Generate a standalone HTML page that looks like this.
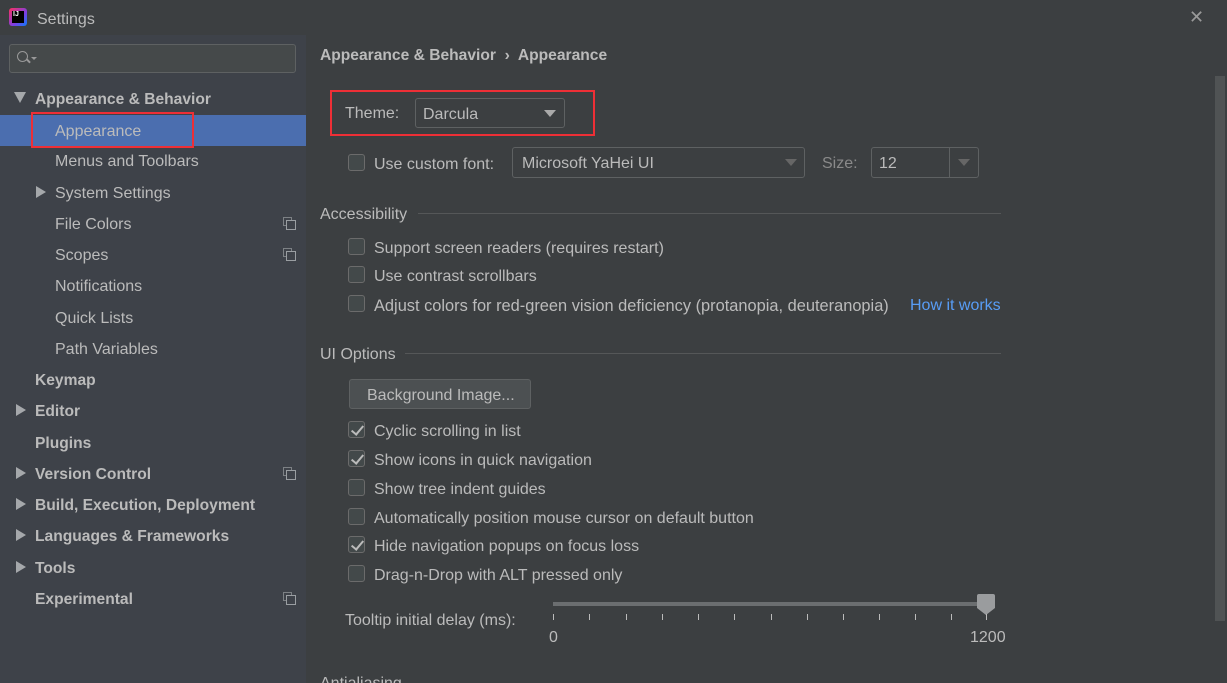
<!DOCTYPE html>
<html style="overflow:hidden"><head><meta charset="utf-8"><style>
*{margin:0;padding:0;box-sizing:border-box}
html,body{width:1227px;height:683px;overflow:hidden}
body{background:#3c3f41;font-family:"Liberation Sans",sans-serif;color:#bbbbbb;font-size:16px;position:relative}
.a{position:absolute;white-space:nowrap;line-height:20px;margin-top:2px}
.b{font-weight:bold;font-size:15.6px}
#side{position:absolute;left:0;top:35px;width:306px;height:648px;background:#3e4249}
.tri{position:absolute;width:0;height:0;border-top:6px solid transparent;border-bottom:6px solid transparent;border-left:10px solid #a5a8ab}
.cb{position:absolute;width:17px;height:17px;border:1px solid #6b6b6b;border-radius:3px;background:#43494a}
.cb.on::after{content:"";position:absolute;left:5px;top:1px;width:5px;height:10px;border:solid #bbbbbb;border-width:0 2px 2px 0;transform:rotate(40deg)}
.ico{position:absolute;width:9px;height:9px;border:1px solid #7d8185}
.ico::after{content:"";position:absolute;left:2px;top:2px;width:8px;height:8px;border:1px solid #9a9ea2;background:#3e4249}
.line{position:absolute;height:1px;background:#555758}
.tick{position:absolute;width:1px;height:6px;background:#bbb;top:614px}
</style></head><body>
<div style="position:absolute;left:9px;top:8px;width:18px;height:18px;border-radius:3px;background:linear-gradient(135deg,#fe315d,#7b3fe4 60%,#087cfa)"></div>
<div style="position:absolute;left:12px;top:11px;width:12px;height:12px;background:#000;color:#fff;font-size:7px;font-weight:bold;line-height:8px;padding-left:1px">IJ</div>
<div class="a" style="left:37px;top:8px;font-size:16px">Settings</div>
<div class="a" style="left:1189px;top:5px;font-size:18px;color:#9a9a9a">✕</div>

<div id="side"></div>
<div style="position:absolute;left:9px;top:44px;width:287px;height:29px;border:1px solid #5e6162;border-radius:3px;background:#45494a"></div>
<div style="position:absolute;left:17px;top:51px;width:11px;height:11px;border:1.5px solid #999;border-radius:50%"></div>
<div style="position:absolute;left:26px;top:60px;width:5px;height:1.5px;background:#999;transform:rotate(45deg)"></div>
<div style="position:absolute;left:31px;top:57px;border-left:3px solid transparent;border-right:3px solid transparent;border-top:3px solid #999"></div>

<div style="position:absolute;left:14px;top:92px;border-left:6px solid transparent;border-right:6px solid transparent;border-top:11px solid #a5a8ab"></div>
<div class="a b" style="left:35px;top:88px">Appearance &amp; Behavior</div>
<div style="position:absolute;left:0;top:115px;width:306px;height:31px;background:#4b6eaf"></div>
<div style="position:absolute;left:31px;top:112px;width:163px;height:36px;border:2px solid #ee2f36"></div>
<div class="a" style="left:55px;top:120px">Appearance</div>
<div class="a" style="left:55px;top:150px">Menus and Toolbars</div>
<div class="tri" style="left:36px;top:186px"></div>
<div class="a" style="left:55px;top:182px">System Settings</div>
<div class="a" style="left:55px;top:213px">File Colors</div><div class="ico" style="left:283px;top:217px"></div>
<div class="a" style="left:55px;top:244px">Scopes</div><div class="ico" style="left:283px;top:248px"></div>
<div class="a" style="left:55px;top:275px">Notifications</div>
<div class="a" style="left:55px;top:307px">Quick Lists</div>
<div class="a" style="left:55px;top:338px">Path Variables</div>
<div class="a b" style="left:35px;top:369px">Keymap</div>
<div class="tri" style="left:16px;top:404px"></div><div class="a b" style="left:35px;top:400px">Editor</div>
<div class="a b" style="left:35px;top:432px">Plugins</div>
<div class="tri" style="left:16px;top:467px"></div><div class="a b" style="left:35px;top:463px">Version Control</div><div class="ico" style="left:283px;top:467px"></div>
<div class="tri" style="left:16px;top:498px"></div><div class="a b" style="left:35px;top:494px">Build, Execution, Deployment</div>
<div class="tri" style="left:16px;top:529px"></div><div class="a b" style="left:35px;top:525px">Languages &amp; Frameworks</div>
<div class="tri" style="left:16px;top:561px"></div><div class="a b" style="left:35px;top:557px">Tools</div>
<div class="a b" style="left:35px;top:588px">Experimental</div><div class="ico" style="left:283px;top:592px"></div>

<div class="a b" style="left:320px;top:44px">Appearance &amp; Behavior &nbsp;›&nbsp; Appearance</div>
<div style="position:absolute;left:1215px;top:76px;width:10px;height:545px;background:#505354"></div>

<div style="position:absolute;left:330px;top:90px;width:265px;height:46px;border:2px solid #ee2f36"></div>
<div class="a" style="left:345px;top:102px">Theme:</div>
<div style="position:absolute;left:415px;top:98px;width:150px;height:30px;border:1px solid #5e6162;border-radius:3px;background:#3c3f41"></div>
<div class="a" style="left:423px;top:103px">Darcula</div>
<div style="position:absolute;left:544px;top:110px;border-left:6px solid transparent;border-right:6px solid transparent;border-top:7px solid #aaa"></div>

<div class="cb" style="left:348px;top:154px"></div>
<div class="a" style="left:374px;top:153px">Use custom font:</div>
<div style="position:absolute;left:512px;top:147px;width:293px;height:31px;border:1px solid #5e6162;border-radius:3px"></div>
<div class="a" style="left:522px;top:152px">Microsoft YaHei UI</div>
<div style="position:absolute;left:785px;top:159px;border-left:6px solid transparent;border-right:6px solid transparent;border-top:7px solid #666"></div>
<div class="a" style="left:822px;top:152px;color:#8a8a8a">Size:</div>
<div style="position:absolute;left:871px;top:147px;width:108px;height:31px;border:1px solid #5e6162;border-radius:3px"></div>
<div style="position:absolute;left:949px;top:148px;width:1px;height:29px;background:#5e6162"></div>
<div class="a" style="left:879px;top:152px">12</div>
<div style="position:absolute;left:958px;top:159px;border-left:6px solid transparent;border-right:6px solid transparent;border-top:7px solid #666"></div>

<div class="a" style="left:320px;top:203px">Accessibility</div><div class="line" style="left:418px;top:213px;width:583px"></div>
<div class="cb" style="left:348px;top:238px"></div><div class="a" style="left:374px;top:237px">Support screen readers (requires restart)</div>
<div class="cb" style="left:348px;top:266px"></div><div class="a" style="left:374px;top:265px">Use contrast scrollbars</div>
<div class="cb" style="left:348px;top:295px"></div><div class="a" style="left:374px;top:294px;font-size:16.4px">Adjust colors for red-green vision deficiency (protanopia, deuteranopia)</div>
<div class="a" style="left:910px;top:294px;color:#589df6">How it works</div>

<div class="a" style="left:320px;top:343px">UI Options</div><div class="line" style="left:405px;top:353px;width:596px"></div>
<div style="position:absolute;left:349px;top:379px;width:182px;height:30px;border:1px solid #5e6162;border-radius:3px;background:#4c5052"></div>
<div class="a" style="left:367px;top:384px">Background Image...</div>
<div class="cb on" style="left:348px;top:421px"></div><div class="a" style="left:374px;top:420px">Cyclic scrolling in list</div>
<div class="cb on" style="left:348px;top:450px"></div><div class="a" style="left:374px;top:449px">Show icons in quick navigation</div>
<div class="cb" style="left:348px;top:479px"></div><div class="a" style="left:374px;top:478px">Show tree indent guides</div>
<div class="cb" style="left:348px;top:508px"></div><div class="a" style="left:374px;top:507px">Automatically position mouse cursor on default button</div>
<div class="cb on" style="left:348px;top:536px"></div><div class="a" style="left:374px;top:535px">Hide navigation popups on focus loss</div>
<div class="cb" style="left:348px;top:565px"></div><div class="a" style="left:374px;top:564px">Drag-n-Drop with ALT pressed only</div>

<div class="a" style="left:345px;top:609px">Tooltip initial delay (ms):</div>
<div style="position:absolute;left:553px;top:602px;width:430px;height:4px;background:#6b6e70"></div>
<div style="position:absolute;left:977px;top:594px;width:18px;height:14px;background:#9a9c9e;border-radius:2px 2px 0 0"></div>
<div style="position:absolute;left:977px;top:608px;border-left:9px solid transparent;border-right:9px solid transparent;border-top:7px solid #9a9c9e"></div>
<div class="tick" style="left:553px"></div><div class="tick" style="left:589px"></div><div class="tick" style="left:626px"></div><div class="tick" style="left:662px"></div><div class="tick" style="left:698px"></div><div class="tick" style="left:734px"></div><div class="tick" style="left:771px"></div><div class="tick" style="left:807px"></div><div class="tick" style="left:843px"></div><div class="tick" style="left:879px"></div><div class="tick" style="left:915px"></div><div class="tick" style="left:951px"></div><div class="tick" style="left:986px"></div>
<div class="a" style="left:549px;top:626px">0</div>
<div class="a" style="left:970px;top:626px">1200</div>
<div class="a" style="left:320px;top:672px">Antialiasing</div>
</body></html>
